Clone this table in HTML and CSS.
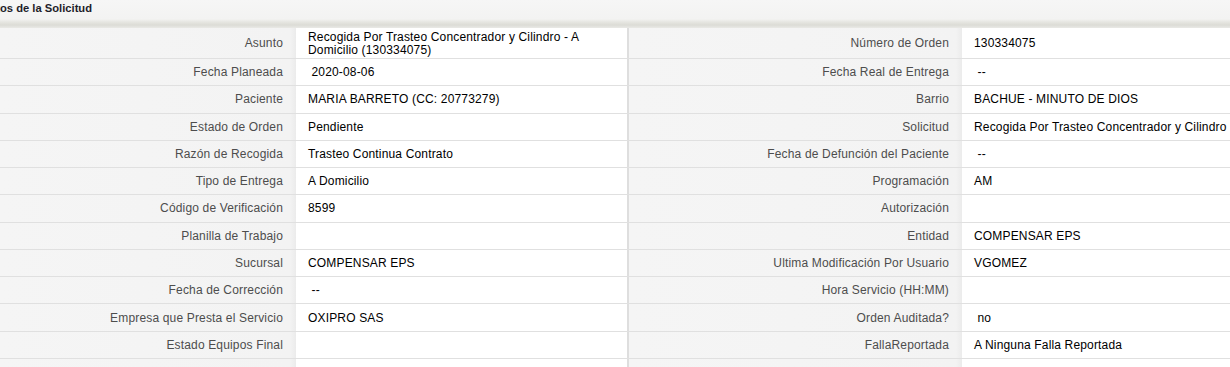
FILE: index.html
```html
<!DOCTYPE html>
<html lang="es">
<head>
<meta charset="utf-8">
<title>Datos de la Solicitud</title>
<link rel="stylesheet" href="styles.css">
</head>
<body>
<div class="section">
  <div class="section-head"><h3 class="section-title">Datos de la Solicitud</h3></div>
  <div class="detail">
    <div class="row first">
      <div class="lbl">Asunto</div>
      <div class="val">Recogida Por Trasteo Concentrador y Cilindro - A Domicilio (130334075)</div>
      <div class="lbl lbl2">Número de Orden</div>
      <div class="val">130334075</div>
    </div>
    <div class="row">
      <div class="lbl">Fecha Planeada</div>
      <div class="val">&nbsp;2020-08-06</div>
      <div class="lbl lbl2">Fecha Real de Entrega</div>
      <div class="val">&nbsp;--</div>
    </div>
    <div class="row">
      <div class="lbl">Paciente</div>
      <div class="val">MARIA BARRETO (CC: 20773279)</div>
      <div class="lbl lbl2">Barrio</div>
      <div class="val">BACHUE - MINUTO DE DIOS</div>
    </div>
    <div class="row">
      <div class="lbl">Estado de Orden</div>
      <div class="val">Pendiente</div>
      <div class="lbl lbl2">Solicitud</div>
      <div class="val">Recogida Por Trasteo Concentrador y Cilindro</div>
    </div>
    <div class="row">
      <div class="lbl">Razón de Recogida</div>
      <div class="val">Trasteo Continua Contrato</div>
      <div class="lbl lbl2">Fecha de Defunción del Paciente</div>
      <div class="val">&nbsp;--</div>
    </div>
    <div class="row">
      <div class="lbl">Tipo de Entrega</div>
      <div class="val">A Domicilio</div>
      <div class="lbl lbl2">Programación</div>
      <div class="val">AM</div>
    </div>
    <div class="row">
      <div class="lbl">Código de Verificación</div>
      <div class="val">8599</div>
      <div class="lbl lbl2">Autorización</div>
      <div class="val"></div>
    </div>
    <div class="row">
      <div class="lbl">Planilla de Trabajo</div>
      <div class="val"></div>
      <div class="lbl lbl2">Entidad</div>
      <div class="val">COMPENSAR EPS</div>
    </div>
    <div class="row">
      <div class="lbl">Sucursal</div>
      <div class="val">COMPENSAR EPS</div>
      <div class="lbl lbl2">Ultima Modificación Por Usuario</div>
      <div class="val">VGOMEZ</div>
    </div>
    <div class="row">
      <div class="lbl">Fecha de Corrección</div>
      <div class="val">&nbsp;--</div>
      <div class="lbl lbl2">Hora Servicio (HH:MM)</div>
      <div class="val"></div>
    </div>
    <div class="row">
      <div class="lbl">Empresa que Presta el Servicio</div>
      <div class="val">OXIPRO SAS</div>
      <div class="lbl lbl2">Orden Auditada?</div>
      <div class="val">&nbsp;no</div>
    </div>
    <div class="row">
      <div class="lbl">Estado Equipos Final</div>
      <div class="val"></div>
      <div class="lbl lbl2">FallaReportada</div>
      <div class="val">A Ninguna Falla Reportada</div>
    </div>
    <div class="row">
      <div class="lbl"></div>
      <div class="val"></div>
      <div class="lbl lbl2"></div>
      <div class="val"></div>
    </div>
  </div>
</div>
</body>
</html>
```
FILE: styles.css
```css
html, body {
  margin: 0;
  padding: 0;
  background: #ffffff;
  overflow: hidden;
}
body {
  width: 1230px;
  height: 367px;
  font-family: "Liberation Sans", Arial, sans-serif;
  font-size: 12px;
  color: #000;
}
.section {
  width: 1300px;
}
.section-head {
  height: 28px;
  background: linear-gradient(to bottom, #f6f6f6 0, #f3f3f2 19px, #e6e6e1 22px, #dcdcd6 25px, #e9e9e6 28px);
  overflow: hidden;
}
.section-title {
  margin: 0 0 0 -18px;
  padding-top: 1px;
  font-size: 11.2px;
  line-height: 15px;
  font-weight: bold;
  color: #1e1e2a;
}
.detail {
  display: flex;
  flex-direction: column;
}
.row {
  display: grid;
  grid-template-columns: 296px 331px 335px 338px;
  height: 27.27px;
  box-sizing: border-box;
  border-bottom: 1px solid #e0e0e0;
}
.row.first {
  height: 31px;
}
.lbl, .val {
  display: flex;
  align-items: center;
  line-height: 14px;
  letter-spacing: 0.16px;
  overflow: hidden;
}
.lbl {
  justify-content: flex-end;
  padding-right: 13px;
  color: #4d4d4d;
  text-align: right;
  background: linear-gradient(to right, #f5f5f5 0, #f3f3f3 calc(100% - 6px), #ebebeb 100%);
}
.lbl2 {
  border-left: 2px solid #dedede;
}
.val {
  padding: 0 12px;
  color: #000;
  background: #fff;
}
.first .val {
  line-height: 13px;
  padding-top: 1px;
}
```
